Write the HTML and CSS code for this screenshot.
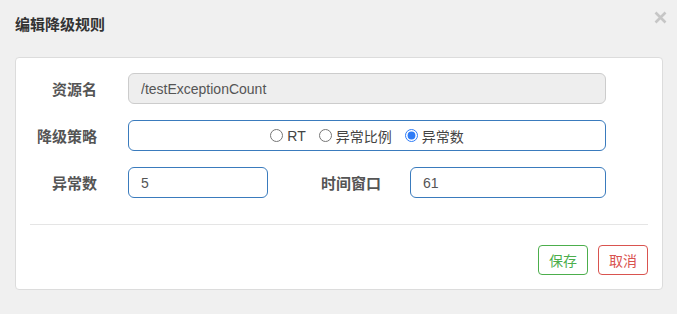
FILE: index.html
```html
<!DOCTYPE html>
<html lang="zh-CN">
<head>
<meta charset="UTF-8">
<title>编辑降级规则</title>
<link rel="stylesheet" href="styles.css">
</head>
<body>

<!-- 标题 -->
<div class="modal-header">
    <h4 class="modal-title">编辑降级规则</h4>
    <span class="close">
        <svg width="13" height="13" viewBox="0 0 13 13">
            <path d="M1.5 1.5L11.5 11.5M11.5 1.5L1.5 11.5" stroke="currentColor" stroke-width="2.6" fill="none"/>
        </svg>
    </span>
</div>

<!-- 表单 -->
<div class="panel">
    <div class="form-row">
        <label class="control-label">资源名</label>
        <input class="form-control" type="text" value="/testExceptionCount" disabled>
    </div>

    <div class="form-row">
        <label class="control-label">降级策略</label>
        <div class="form-control radio-group">
            <label class="radio"><input type="radio" name="grade">RT</label>
            <label class="radio"><input type="radio" name="grade">异常比例</label>
            <label class="radio"><input type="radio" name="grade" checked>异常数</label>
        </div>
    </div>

    <div class="form-row split">
        <label class="control-label">异常数</label>
        <input class="form-control" type="text" value="5">
        <label class="control-label second">时间窗口</label>
        <input class="form-control" type="text" value="61">
    </div>

    <hr class="divider">

    <div class="footer">
        <button class="btn btn-save">保存</button>
        <button class="btn btn-cancel">取消</button>
    </div>
</div>

</body>
</html>
```

FILE: styles.css
```css
body {
margin: 0;
background: #f0f0f0;
font-family: "Liberation Sans", "Noto Sans CJK SC", sans-serif;
color: #333;
}

.modal-header {
display: flex;
justify-content: space-between;
align-items: flex-start;
height: 57px;
box-sizing: border-box;
padding: 14px 10px 0 15px;
}

.modal-title {
margin: 0;
font-size: 15px;
line-height: 22px;
font-weight: bold;
color: #333;
}

.close {
display: block;
margin-top: -3px;
color: #c6c6c6;
cursor: pointer;
}

.close svg {
display: block;
}

.panel {
width: 648px;
box-sizing: border-box;
margin-left: 15px;
background: #fff;
border: 1px solid #dcdcdc;
border-radius: 4px;
padding: 15px 14px 14px 14px;
}

.form-row {
display: grid;
grid-template-columns: 98px 478px;
align-items: center;
margin-bottom: 16px;
}

.form-row.split {
grid-template-columns: 98px 140px 142px 196px;
margin-bottom: 0;
}

.control-label {
padding-right: 31px;
text-align: right;
font-size: 15px;
font-weight: bold;
color: #555;
}

.control-label.second {
padding-right: 29px;
}

.form-control {
height: 31px;
box-sizing: border-box;
border: 1px solid #3a7bbd;
border-radius: 6px;
padding: 0 12px;
font-family: inherit;
font-size: 14px;
color: #555;
background: #fff;
outline: none;
}

.form-control:disabled {
background: #eee;
border-color: #ccc;
}

.radio-group {
display: flex;
justify-content: center;
align-items: center;
color: #444;
}

.radio {
display: flex;
align-items: center;
margin-left: 13px;
font-size: 14px;
}

.radio:first-child {
margin-left: 0;
}

.radio input {
width: 13px;
height: 13px;
margin: 0 4px 0 0;
accent-color: #2f7cf6;
}

.divider {
border: none;
border-top: 1px solid #e5e5e5;
margin: 26px 0 20px 0;
}

.footer {
display: flex;
justify-content: flex-end;
gap: 10px;
}

.btn {
width: 50px;
height: 30px;
background: #fff;
border: 1px solid;
border-radius: 4px;
font-family: inherit;
font-size: 14px;
cursor: pointer;
}

.btn-save {
color: #4cae4c;
border-color: #4cae4c;
}

.btn-cancel {
color: #d9534f;
border-color: #d9534f;
}
```
